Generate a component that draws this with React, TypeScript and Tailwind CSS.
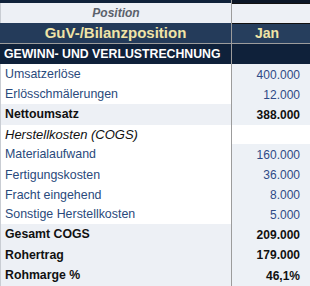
import React from 'react';

type Row = {
  label: string;
  value?: string;
  bold?: boolean;
  italicHead?: boolean;
  shaded?: boolean;
  h: string;
};

const rows: Row[] = [
  { label: 'Umsatzerlöse', value: '400.000', h: 'h-[21px]' },
  { label: 'Erlösschmälerungen', value: '12.000', h: 'h-[19px]' },
  { label: 'Nettoumsatz', value: '388.000', bold: true, shaded: true, h: 'h-[21px]' },
  { label: 'Herstellkosten (COGS)', italicHead: true, h: 'h-[19px]' },
  { label: 'Materialaufwand', value: '160.000', h: 'h-[21px]' },
  { label: 'Fertigungskosten', value: '36.000', h: 'h-[20px]' },
  { label: 'Fracht eingehend', value: '8.000', h: 'h-[20px]' },
  { label: 'Sonstige Herstellkosten', value: '5.000', h: 'h-[19px]' },
  { label: 'Gesamt COGS', value: '209.000', bold: true, shaded: true, h: 'h-[21px]' },
  { label: 'Rohertrag', value: '179.000', bold: true, shaded: true, h: 'h-[20px]' },
  { label: 'Rohmarge %', value: '46,1%', bold: true, shaded: true, h: 'h-[21px]' },
];

export default function App() {
  return (
    <div className="w-[310px] h-[286px] overflow-hidden bg-white font-['Liberation_Sans',Arial,sans-serif] text-[12px]">
      {/* top strip */}
      <div className="flex h-[3px]">
        <div className="w-[232px] bg-[#10223a] border-r border-[#9c9c9c]" />
        <div className="flex-1 bg-[#0b1626]" />
      </div>
      {/* Position */}
      <div className="flex h-[20px]">
        <div className="w-[232px] bg-[#edf0f5] border-r border-[#9c9c9c] border-l border-l-[#c9cdd3] flex items-center justify-center font-bold italic text-[#5a616b]">
          Position
        </div>
        <div className="flex-1 bg-[#edf0f5] border-t border-[#111]" />
      </div>
      {/* header */}
      <div className="flex h-[20px] font-bold text-[#f0e4a6]">
        <div className="w-[232px] bg-[#243b5a] border-r border-[#9c9c9c] flex items-center justify-center text-[15px]">
          GuV-/Bilanzposition
        </div>
        <div className="flex-1 bg-[#263e5d] border-t border-[#111] flex items-center justify-center pr-[8px] text-[14px]">
          Jan
        </div>
      </div>
      <div className="h-[1px] bg-[#9c9c9c]" />
      {/* section */}
      <div className="flex h-[20px]">
        <div className="w-[232px] bg-[#0f213a] border-r border-[#9c9c9c] flex items-center pl-[4px] font-bold text-white text-[12.3px]">
          GEWINN- UND VERLUSTRECHNUNG
        </div>
        <div className="flex-1 bg-[#0f213a]" />
      </div>
      {rows.map((r) => (
        <div key={r.label} className={`flex ${r.h}`}>
          <div
            className={`w-[232px] border-r border-[#9c9c9c] border-l border-l-[#c9cdd3] flex items-center pl-[4px] ${
              r.shaded ? 'bg-[#edf0f5]' : 'bg-white'
            } ${
              r.italicHead
                ? 'italic text-[13px] text-[#111]'
                : r.bold
                ? 'font-bold text-[12.3px] text-[#111]'
                : 'text-[12.4px] text-[#2a4a7c]'
            }`}
          >
            {r.label}
          </div>
          <div
            className={`flex-1 flex items-center justify-end pr-[10px] ${
              r.italicHead ? 'bg-white' : 'bg-[#edf1f6]'
            } ${r.bold ? 'font-bold text-[#111]' : 'text-[#2f4a86]'}`}
          >
            {r.value}
          </div>
        </div>
      ))}
    </div>
  );
}
